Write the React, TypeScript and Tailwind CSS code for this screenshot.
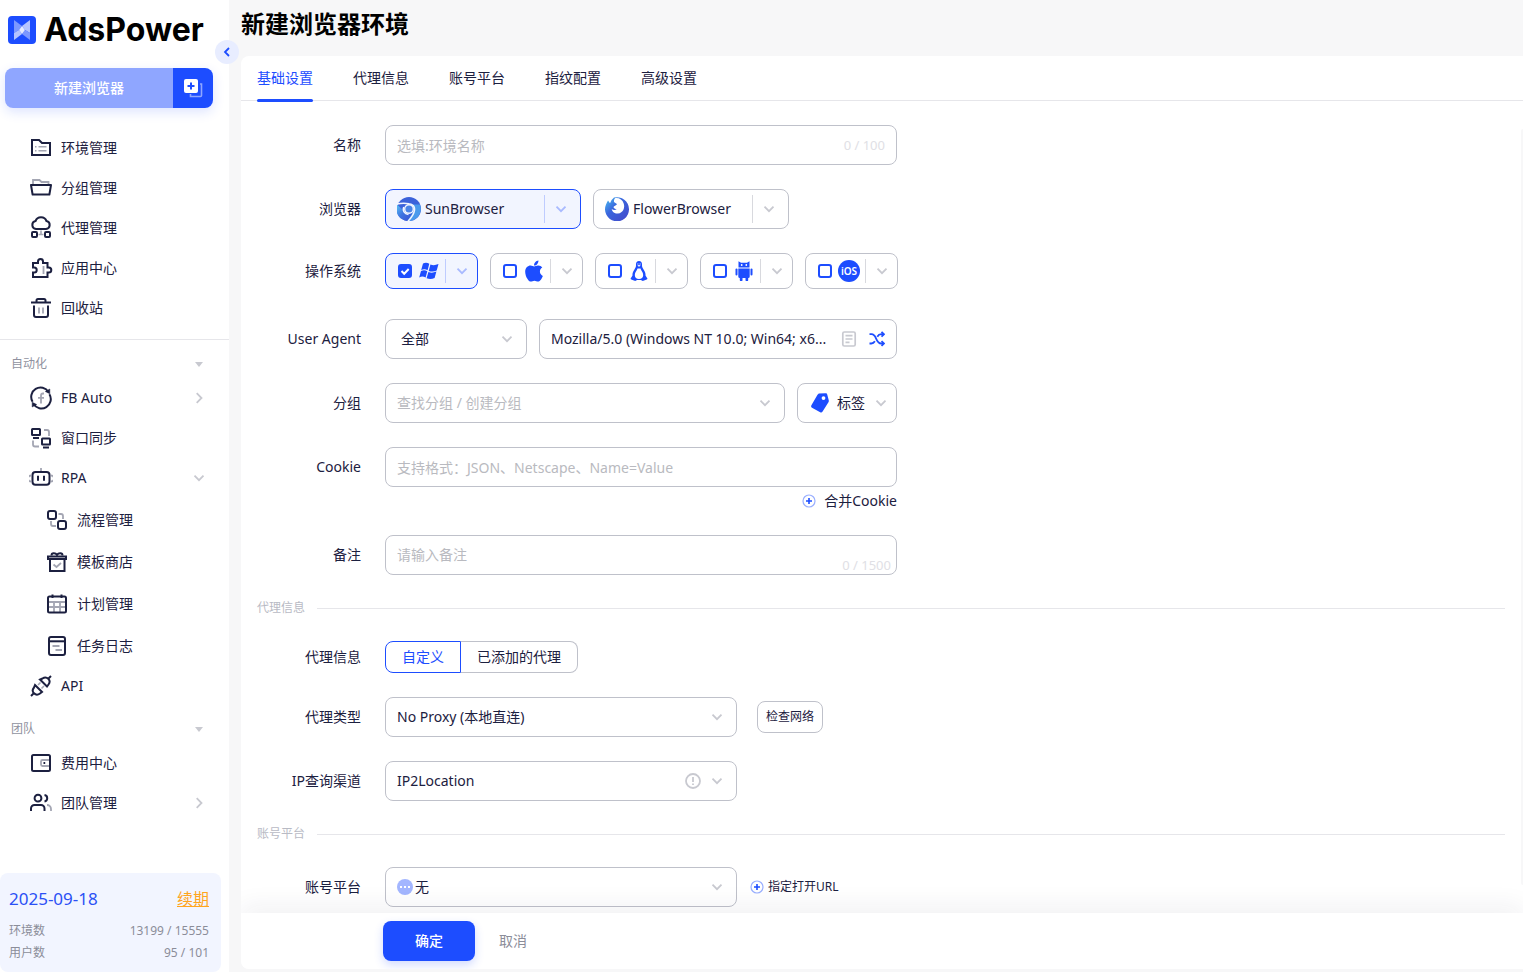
import React, { useState } from "react";
import { FaApple } from "react-icons/fa";

type IconName =
  | "env"
  | "group"
  | "proxy"
  | "apps"
  | "trash"
  | "fb"
  | "sync"
  | "rpa"
  | "flow"
  | "shop"
  | "plan"
  | "log"
  | "api"
  | "wallet"
  | "team";

type NavEntry = { title: string; icon: IconName; arrow?: "right" | "down"; sub?: boolean };

const mainNav: NavEntry[] = [
  { title: "环境管理", icon: "env" },
  { title: "分组管理", icon: "group" },
  { title: "代理管理", icon: "proxy" },
  { title: "应用中心", icon: "apps" },
  { title: "回收站", icon: "trash" },
];

const autoNav: NavEntry[] = [
  { title: "FB Auto", icon: "fb", arrow: "right" },
  { title: "窗口同步", icon: "sync" },
  { title: "RPA", icon: "rpa", arrow: "down" },
  { title: "流程管理", icon: "flow", sub: true },
  { title: "模板商店", icon: "shop", sub: true },
  { title: "计划管理", icon: "plan", sub: true },
  { title: "任务日志", icon: "log", sub: true },
  { title: "API", icon: "api" },
];

const teamNav: NavEntry[] = [
  { title: "费用中心", icon: "wallet" },
  { title: "团队管理", icon: "team", arrow: "right" },
];

const tabs = ["基础设置", "代理信息", "账号平台", "指纹配置", "高级设置"];

// first drawing is the dark outline, second one the pale detail
const navIcons: Record<IconName, [React.ReactNode, React.ReactNode]> = {
  env: [
    <path d="M3 4h7l3 3h8v12H3z" />,
    <path d="M6 10.8h1.5M9.5 10.8h8M6 14.8h1.5M9.5 14.8h8" strokeWidth="1.6" />,
  ],
  group: [<path d="M2 9h20l-1.6 9.5H3.6z" strokeLinejoin="round" />, <path d="M4 8V4h6.5l2 2H19.500v2" strokeWidth="1.8" />],
  proxy: [
    <>
      <path d="M7 13a4 4 0 0 1-.5-7.9 5.8 5.8 0 0 1 11 0A4 4 0 0 1 17 13z" />
      <rect x="3" y="16" width="5" height="5" rx="1" />
      <rect x="16" y="16" width="5" height="5" rx="1" />
    </>,
    <path d="M12 14.5v4M9.5 18.5h5" strokeWidth="1.6" />,
  ],
  apps: [
    <path d="M4 7h5V5.500a2.500 2.500 0 0 1 5 0V7h4.500v4.500h1.300a2.400 2.400 0 0 1 0 5h-1.300V21H4v-4.500h1.200a2.500 2.500 0 0 0 0-5H4z" />,
    <path d="M14.500 10v8" strokeWidth="1.8" />,
  ],
  trash: [
    <path d="M2 6.500h20M7.500 6V4.500a1.500 1.500 0 0 1 1.500-1.500h6a1.500 1.500 0 0 1 1.500 1.500V6M5 9.500V19a2 2 0 0 0 2 2h10a2 2 0 0 0 2-2V9.500" />,
    <path d="M10 11.500v6M14 11.500v6" strokeWidth="1.8" />,
  ],
  fb: [
    <>
      <path d="M19.500 6A9.300 9.300 0 0 0 3.600 15.800" />
      <path d="M4.500 18a9.300 9.300 0 0 0 15.900-9.800" />
      <path d="M20.800 3v4.800L16.300 5.500zM3.200 21v-4.800l4.500 2.300z" fill="currentColor" strokeWidth=".5" />
    </>,
    <path d="M15 7.500h-1a2 2 0 0 0-2 2V17.500M9 11.800h6" strokeWidth="1.8" />,
  ],
  sync: [
    <>
      <rect x="3" y="3" width="8" height="6" rx=".5" />
      <rect x="13" y="12.5" width="8" height="6" rx=".5" />
      <path d="M4 12h6M14 21.500h6" />
    </>,
    <path d="M15 4h3a2 2 0 0 1 2 2v4M4 14.500V18.500a2 2 0 0 0 2 2h4" strokeWidth="1.8" />,
  ],
  rpa: [
    <>
      <rect x="3.5" y="6" width="17" height="12.8" rx="3" />
      <path d="M9 9.800v5M15 9.800v5" />
    </>,
    <path d="M12 2v3M2 9.500a2.800 2.800 0 0 0 0 6M22 9.500a2.800 2.800 0 0 1 0 6" strokeWidth="1.8" />,
  ],
  flow: [
    <>
      <rect x="3" y="3" width="8" height="8" rx="2" />
      <rect x="13" y="13" width="8" height="8" rx="2" />
    </>,
    <path d="M13.500 6H16a2 2 0 0 1 2 2v3M6 13v3a2 2 0 0 0 2 2h3" strokeWidth="1.8" />,
  ],
  shop: [
    <>
      <path d="M3 6.500h18V9H3zM5 9.500V21h14.500V9.500" />
      <path d="M6.500 5.500c0-2.800 4-2.800 5.500-.5 1.500-2.300 5.500-2.300 5.500.5" />
    </>,
    <path d="m8.500 14.500 3 2.500 4.500-4" strokeWidth="1.8" />,
  ],
  plan: [
    <>
      <rect x="3" y="4.5" width="18" height="16" rx="1.5" />
      <path d="M7.500 2.500V6M16.500 2.500V6" />
    </>,
    <path d="M4 10h16M4 15h16M9 10v10M15 10v10" strokeWidth="1.8" />,
  ],
  log: [
    <>
      <rect x="4" y="3" width="16" height="18" rx="2" />
      <path d="M4 7.300h16" />
    </>,
    <path d="M7.500 12h7M10.500 16h6.500" strokeWidth="1.8" />,
  ],
  api: [
    <path d="m6 11 7 7-2 1.500c-2 1.500-4.500 1.300-6-.2s-1.500-4 0-5.800L6 11zM11 5.500l7 7 1.500-2c1.500-2 1.300-4.200-.2-5.700s-4-1.600-5.800-.3zM2 22l3-3M19 5l3-3" />,
    <path d="m9 11 2.500-2.500M12.500 14.500l2.500-2.500" strokeWidth="1.6" />,
  ],
  wallet: [
    <>
      <rect x="3" y="4" width="18" height="16" rx="1.5" />
      <path d="M14.500 12h1.700" />
    </>,
    <path d="M20 9h-6.500a1.500 1.500 0 0 0-1.500 1.500v3a1.500 1.500 0 0 0 1.500 1.500H20" strokeWidth="1.8" />,
  ],
  team: [
    <path d="M2 20v-2.500A3.500 3.500 0 0 1 5.500 14h6.500a3.500 3.500 0 0 1 3.500 3.500V20M9 3.800a3.400 3.400 0 1 1 0 6.800 3.400 3.400 0 1 1 0-6.800M15.500 4a3.300 3.300 0 0 1 0 6.500" />,
    <path d="M18 14a4 4 0 0 1 4 4v2" strokeWidth="1.8" />,
  ],
};

const NavIcon = ({ name }: { name: IconName }) => (
  <svg width="24" height="24" viewBox="0 0 24 24" fill="none" stroke="currentColor" strokeWidth="2" className="shrink-0">
    <g opacity=".4">{navIcons[name][1]}</g>
    {navIcons[name][0]}
  </svg>
);

const Chevron = ({ dir = "down" }: { dir?: "down" | "right" | "left" }) => (
  <svg width="12" height="12" viewBox="0 0 12 12" fill="none" stroke="currentColor" strokeWidth="1.8" className="shrink-0">
    {dir === "down" && <path d="m1.500 3.700 4.500 4.500 4.500-4.500" />}
    {dir === "right" && <path d="M3.700 1.200 8.500 6l-4.800 4.800" />}
    {dir === "left" && <path d="M8 2 4 6l4 4" />}
  </svg>
);

const PlusCircle = () => (
  <svg width="14" height="14" viewBox="0 0 14 14" fill="none" stroke="#1d4dff">
    <circle cx="7" cy="7" r="6" strokeOpacity=".45" strokeWidth="1.2" />
    <path d="M7 4v6M4 7h6" strokeWidth="1.6" />
  </svg>
);

const NavItem = ({ item }: { item: NavEntry }) => (
  <a
    href="#"
    className={`flex items-center gap-2 pr-6 ${item.sub ? "h-[42px] pt-0.5 pl-[45px]" : "h-10 pl-[29px]"}`}
  >
    <NavIcon name={item.icon} />
    <span className="flex-1">{item.title}</span>
    {item.arrow && (
      <span className="text-[#c8c9d0]">
        <Chevron dir={item.arrow} />
      </span>
    )}
  </a>
);

const NavSection = ({ title }: { title: string }) => (
  <button className="mt-[9px] flex h-7 w-full items-center justify-between pl-[11px] pr-[26px] text-xs text-[#9092a0]">
    {title}
    <svg width="8" height="5" viewBox="0 0 8 5" fill="#c8c9d0">
      <path d="M0 0h8L4 5z" />
    </svg>
  </button>
);

const Sidebar = () => (
  <aside className="relative flex w-[229px] shrink-0 flex-col bg-white">
    {/* Brand */}
    <div className="flex h-[60px] items-center gap-2 pl-2">
      <svg width="28" height="28" viewBox="0 0 28 28">
        <rect width="28" height="28" rx="4" fill="#1d4dff" />
        <path d="M6 4l8 6-3 4-5 3z" fill="#7d98ff" />
        <path d="M22 4l-8 6 3 4 5 3z" fill="#b5c4ff" />
        <path d="M6 24l8-6-3-4-5 3z" fill="#b5c4ff" />
        <path d="M22 24l-8-6 3-4 5 3z" fill="#7d98ff" />
        <path d="M6 17l5-3 3-4 3 4-3 4-3-4zM14 10l3 4-3 4-3-4z" fill="#e6ebff" />
      </svg>
      <span className="font-['Inter',sans-serif] text-[32px] font-bold text-black">AdsPower</span>
    </div>
    <button
      aria-label="收起"
      className="absolute top-10 -right-2.5 flex size-6 items-center justify-center rounded-full bg-[#e8edff] text-[#1d4dff]"
    >
      <Chevron dir="left" />
    </button>

    {/* New browser */}
    <div className="mt-2 mb-5 ml-[5px] flex h-10 w-[208px] overflow-hidden rounded-lg text-white shadow-[0_4px_12px_rgba(29,77,255,0.15)]">
      <button className="flex-1 bg-[#8fa6ff] font-medium">新建浏览器</button>
      <button aria-label="批量新建" className="flex w-10 items-center justify-center bg-[#1d4dff]">
        <svg width="20" height="20" viewBox="0 0 20 20" fill="none">
          <path d="M17 6h1.500v11.500a1 1 0 0 1-1 1H7.500V16" stroke="#8fa6ff" strokeWidth="1.6" />
          <rect x="1" y="1" width="14" height="14" rx="2" fill="#fff" />
          <path d="M8 4.500v7M4.500 8h7" stroke="#1d4dff" strokeWidth="2" />
        </svg>
      </button>
    </div>

    <nav className="flex-1">
      {mainNav.map((item) => (
        <NavItem key={item.title} item={item} />
      ))}
      <div className="mt-[11px] border-t border-[#e6e6ea] pb-px" />
      <NavSection title="自动化" />
      {autoNav.map((item) => (
        <NavItem key={item.title} item={item} />
      ))}
      <NavSection title="团队" />
      {teamNav.map((item) => (
        <NavItem key={item.title} item={item} />
      ))}
    </nav>

    {/* Plan */}
    <div className="mr-2 rounded-lg bg-[#f2f5ff] pt-3.5 pr-3 pb-2 pl-[9px] text-xs text-[#8b8d99]">
      <div className="mb-[9px] flex h-6 items-center justify-between text-base">
        <span className="text-[17px] text-[#2b50f5]">2025-09-18</span>
        <a href="#" className="text-[#ffa51f] underline">续期</a>
      </div>
      <div className="flex h-[22px] items-center justify-between">
        <span>环境数</span>
        <span>13199 / 15555</span>
      </div>
      <div className="flex h-[22px] items-center justify-between">
        <span>用户数</span>
        <span>95 / 101</span>
      </div>
    </div>
  </aside>
);

const Row = ({ label, htmlFor, children }: { label: string; htmlFor?: string; children: React.ReactNode }) => (
  <div className="flex items-start gap-6">
    <label htmlFor={htmlFor} className="flex min-h-10 w-[120px] shrink-0 items-center justify-end">
      {label}
    </label>
    {children}
  </div>
);

const Divider = ({ title }: { title: string }) => (
  <div className="flex h-[66px] items-center gap-3 pr-[18px] pl-4 text-xs text-[#b8bac4]">
    {title}
    <span className="h-px flex-1 bg-[#e6e6ea]" />
  </div>
);

type SelectProps = { id: string; value: string; width: string; text?: string; info?: boolean; dots?: boolean };

const Select = ({ id, value, width, text = "pl-[11px]", info, dots }: SelectProps) => (
  <div className={`relative h-10 ${width}`}>
    <select
      id={id}
      className={`h-full w-full appearance-none rounded-lg border border-[#bfc1ca] bg-white pr-8 outline-none ${text}`}
    >
      <option>{value}</option>
    </select>
    <span className="pointer-events-none absolute inset-y-0 right-3.5 flex items-center gap-2.5 text-[#c8c9d0]">
      {info && (
        <svg width="16" height="16" viewBox="0 0 16 16" fill="none" stroke="currentColor" strokeWidth="1.8">
          <circle cx="8" cy="8" r="7" />
          <path d="M8 4v5M8 10.500v1.500" />
        </svg>
      )}
      <Chevron />
    </span>
    {dots && (
      <span className="pointer-events-none absolute inset-y-0 left-3 flex items-center">
        <svg width="16" height="16" viewBox="0 0 16 16">
          <circle cx="8" cy="8" r="8" fill="#a3b6ff" />
          <path d="M3 7h2v2H3zM7 7h2v2H7zM11 7h2v2h-2z" fill="#fff" />
        </svg>
      </span>
    )}
  </div>
);

const SunLogo = () => (
  <svg width="24" height="24" viewBox="0 0 24 24">
    <defs>
      <linearGradient id="sun" x1="0" y1="0" x2="1" y2="1">
        <stop offset="0" stopColor="#58c4f5" />
        <stop offset=".5" stopColor="#3f74e0" />
        <stop offset="1" stopColor="#3b52d4" />
      </linearGradient>
    </defs>
    <circle cx="12" cy="12" r="12" fill="#3c62da" />
    <path d="M0 7.500A12 12 0 0 0 10.500 23.900L14 17l-7-3z" fill="url(#sun)" />
    <path d="M10.500 23.900A12 12 0 0 0 23 7.500h-7.500l1.500 6z" fill="#4a9aec" />
    <path
      d="M0 7c4-.8 8-.8 12-.3 4 .3 6 3 5.500 6.500-.5 4-3 7.500-6.500 11M6.800 10c-1.500 3.500.5 6.800 4.700 7.500"
      stroke="#f2f5ff"
      strokeWidth="1.5"
      fill="none"
    />
    <circle cx="12" cy="12" r="5" fill="#f2f5ff" />
    <circle cx="12" cy="12" r="3.6" fill="#4a83e6" />
  </svg>
);

const FlowerLogo = () => (
  <svg width="24" height="24" viewBox="0 0 24 24">
    <defs>
      <linearGradient id="flower" x1="0" y1="0" x2="1" y2="1">
        <stop offset="0" stopColor="#4cc3f2" />
        <stop offset=".4" stopColor="#3a66dd" />
        <stop offset="1" stopColor="#4547c9" />
      </linearGradient>
    </defs>
    <path
      d="M3 3.500l2 2.700A12 12 0 0 1 9 .6 12 12 0 0 1 24 12 12 12 0 1 1 1 7.500C1.500 6 2.300 5 3 3.500z"
      fill="url(#flower)"
    />
    <path
      d="M10 1.200c4-.6 7.500 1.500 8.600 5 1.800 4.500-.6 9.800-5.600 10.300-3.500.3-6-2-6.300-4.500 1.500 1.300 3.500 1.300 5 .3-1.500-.3-3-.8-3.200-2.300.7-1.200 2.500-1.300 3.500-2.700-.8-1.300-2.500-1.300-3-2.500-.3-1.300.2-2.600 1-3.600z"
      fill="#fff"
    />
  </svg>
);

const browsers = [
  { name: "SunBrowser", logo: <SunLogo /> },
  { name: "FlowerBrowser", logo: <FlowerLogo /> },
];

const systems = [
  {
    name: "Windows",
    icon: (
      <svg width="20" height="20" viewBox="0 0 20 20" fill="currentColor">
        <path d="M4 2.500c2.300-1.300 4.300-1 6.300.2L8.600 9.200C6.600 8 4.600 7.800 2.200 9zM11.400 3.400c2.500 1.200 4.800 1 8.100-.3l-1.800 6.300c-2.700 1.400-5.200 1.300-8 .5zM2 10c2.300-1.200 4.300-1 6.300.2l-1.700 6.400C4.600 15.400 2.600 15.200.2 16.400zM9.400 11c2.500 1 4.900 1 8-.4l-1.800 6.300c-2.700 1.400-5.200 1.300-8 .4z" />
      </svg>
    ),
  },
  { name: "macOS", icon: <FaApple size={24} className="shrink-0" /> },
  {
    name: "Linux",
    icon: (
      <svg width="20" height="20" viewBox="0 0 20 20">
        <path
          d="M10 0C7.800 0 6.800 1.500 7 4c.1 2-.6 3-1.700 4.700C4 10.800 3.300 12.500 3.500 14.500L1.500 17.800c0 1 2.500 1.200 4 2 1 .4 2-.3 2.500-.8h4c.5.5 1.500 1.200 2.500.8 1.500-.8 4-1 4-2L16.500 14.500c.2-2-.5-3.700-1.800-5.800C13.600 7 12.900 6 13 4c.2-2.500-.8-4-3-4z"
          fill="currentColor"
        />
        <path d="M8.500 7.500h3c.5 2 2.700 3.500 2.700 6.500 0 2.500-1.700 4-4.200 4s-4.200-1.500-4.200-4c0-3 2.200-4.500 2.700-6.500z" fill="#fff" />
        <path d="M8.300 4.500 10 5.800l1.700-1.300L10 4zM8.400 2.500h1v1h-1zM10.600 2.500h1v1h-1z" fill="#fff" />
      </svg>
    ),
  },
  {
    name: "Android",
    icon: (
      <svg width="20" height="20" viewBox="0 0 20 20" fill="currentColor">
        <path d="M4.500 6.500V.2L7 1.800h6L15.500.2v6.300z" />
        <path d="M4.300 7.500h11.400v8a1.500 1.500 0 0 1-1.500 1.500v2a1.200 1.200 0 0 1-2.700 0v-2h-3v2a1.200 1.200 0 0 1-2.700 0v-2a1.500 1.500 0 0 1-1.500-1.500z" />
        <rect x="1.5" y="7.5" width="2" height="7" rx="1" />
        <rect x="16.5" y="7.5" width="2" height="7" rx="1" />
        <circle cx="7.7" cy="4" r=".9" fill="#fff" />
        <circle cx="12.3" cy="4" r=".9" fill="#fff" />
      </svg>
    ),
  },
  {
    name: "iOS",
    icon: (
      <svg width="22" height="22" viewBox="0 0 22 22">
        <circle cx="11" cy="11" r="11" fill="currentColor" />
        <text x="11" y="14.5" textAnchor="middle" fontSize="10" fontWeight="600" fill="#fff">
          iOS
        </text>
      </svg>
    ),
  },
];

const inputClass = "h-10 w-full rounded-lg border border-[#bfc1ca] bg-white px-[11px] outline-none placeholder:text-[#b9bac0]";

const BasicForm = () => {
  const [browser, setBrowser] = useState("SunBrowser");
  const [checked, setChecked] = useState(["Windows"]);

  const toggle = (name: string) =>
    setChecked(checked.includes(name) ? checked.filter((n) => n !== name) : [...checked, name]);

  return (
    <form className="relative min-h-0 flex-1 overflow-hidden pt-6">
      <div className="flex flex-col gap-6">
        <Row label="名称" htmlFor="name">
          <div className="relative w-[512px]">
            <input id="name" placeholder="选填:环境名称" className={inputClass} />
            <span className="absolute inset-y-0 right-3 flex items-center text-[13px] text-[#e0e0e5]">0 / 100</span>
          </div>
        </Row>

        <Row label="浏览器">
          <div className="flex gap-3">
            {browsers.map((b) => {
              const active = b.name === browser;
              return (
                <div
                  key={b.name}
                  className={`flex h-10 w-[196px] items-center rounded-lg border pl-[11px] ${
                    active ? "border-[#1d4dff] bg-[#f2f5ff] text-[#a9baff]" : "border-[#bfc1ca] text-[#c8c9d0]"
                  }`}
                >
                  <button
                    type="button"
                    onClick={() => setBrowser(b.name)}
                    className="flex flex-1 items-center gap-1 text-[#1c2040]"
                  >
                    {b.logo}
                    {b.name}
                  </button>
                  <span className="h-7 w-px bg-current opacity-70" />
                  <button type="button" aria-label="版本" className="flex h-full w-[35px] items-center pl-2.5">
                    <Chevron />
                  </button>
                </div>
              );
            })}
          </div>
        </Row>

        <div className="flex items-start gap-6 pb-1.5">
          <span className="flex h-9 w-[120px] shrink-0 items-center justify-end">操作系统</span>
          <div className="flex gap-3">
            {systems.map((os) => {
              const active = checked.includes(os.name);
              return (
                <div
                  key={os.name}
                  className={`flex h-9 w-[93px] items-center rounded-lg border pl-3 ${
                    active ? "border-[#1d4dff] bg-[#f2f5ff] text-[#a9baff]" : "border-[#bfc1ca] text-[#c8c9d0]"
                  }`}
                >
                  <label className="flex items-center gap-[5px] pr-1 text-[#1d4dff]">
                    <span className="relative flex size-3.5">
                      <input
                        type="checkbox"
                        aria-label={os.name}
                        checked={active}
                        onChange={() => toggle(os.name)}
                        className="size-3.5 appearance-none rounded-[3px] border-2 border-[#1d4dff] checked:bg-[#1d4dff]"
                      />
                      {active && (
                        <svg viewBox="0 0 14 14" fill="none" stroke="#fff" strokeWidth="2" className="pointer-events-none absolute inset-0">
                          <path d="m3.500 7 2.700 2.700 4.500-4.700" />
                        </svg>
                      )}
                    </span>
                    <span className="flex size-6 items-center justify-center">{os.icon}</span>
                  </label>
                  <span className="h-6 w-px bg-current opacity-70" />
                  <button type="button" aria-label={`${os.name} 版本`} className="flex h-full flex-1 items-center pl-2.5">
                    <Chevron />
                  </button>
                </div>
              );
            })}
          </div>
        </div>

        <Row label="User Agent" htmlFor="ua-system">
          <div className="flex w-[512px] gap-3">
            <Select id="ua-system" value="全部" width="w-[142px]" text="pl-[15px]" />
            <div className="flex h-10 flex-1 items-center rounded-lg border border-[#bfc1ca] px-[11px]">
              <input
                aria-label="User Agent"
                defaultValue="Mozilla/5.0 (Windows NT 10.0; Win64; x6..."
                className="min-w-0 flex-1 outline-none"
              />
              <button type="button" aria-label="详情" className="mr-3 ml-1 text-[#c8c9d0]">
                <svg width="16" height="16" viewBox="0 0 16 16" fill="none" stroke="currentColor" strokeWidth="1.7">
                  <rect x="1.8" y="1" width="12.4" height="14" rx="1.5" />
                  <path d="M4.500 4.700h7M4.500 8h7M4.500 11.300h4" />
                </svg>
              </button>
              <button type="button" aria-label="随机" className="text-[#1d4dff]">
                <svg width="16" height="16" viewBox="0 0 16 16" fill="none" stroke="currentColor" strokeWidth="1.8">
                  <path d="M.5 3.200h2c2.200 0 3.300 1.300 4.500 4.100 1.300 3.200 2.700 5.200 5.200 5.200h2M.5 12.500h1.800c1.700 0 2.700-.8 3.600-2.200M8.300 5.800c.9-1.600 2-2.600 3.900-2.600h2" />
                  <path d="M12.500 .8 15 3.200 12.500 5.600M12.500 10.100l2.500 2.400-2.500 2.400" />
                </svg>
              </button>
            </div>
          </div>
        </Row>

        <Row label="分组" htmlFor="group">
          <div className="flex w-[512px] gap-3">
            <Select id="group" value="查找分组 / 创建分组" width="w-[400px]" text="pl-[11px] text-[#b9bac0]" />
            <button type="button" className="flex h-10 w-[100px] items-center rounded-lg border border-[#bfc1ca] pl-3">
              <svg width="20" height="20" viewBox="0 0 20 20" fill="#1d4dff">
                <path
                  fillRule="evenodd"
                  d="M7.500 1.800 8.800.5l6.700-.2c1 0 1.500.5 1.800 1.400l1.500 5.800c.1.5 0 1-.2 1.500l-6 9.600c-.6.9-1.500 1.100-2.400.6l-8.200-4.500c-.9-.5-1.200-1.500-.6-2.400zM13.500 3.200a1.900 1.900 0 1 0 0 3.800 1.900 1.900 0 0 0 0-3.800z"
                />
              </svg>
              <span className="mr-2.5 ml-[7px]">标签</span>
              <span className="text-[#c8c9d0]">
                <Chevron />
              </span>
            </button>
          </div>
        </Row>

        <Row label="Cookie" htmlFor="cookie">
          <div className="w-[512px]">
            <input id="cookie" placeholder="支持格式：JSON、Netscape、Name=Value" className={inputClass} />
            <div className="flex h-6 justify-end pt-1">
              <button type="button" className="flex items-center gap-2">
                <PlusCircle />
                合并Cookie
              </button>
            </div>
          </div>
        </Row>

        <Row label="备注" htmlFor="remark">
          <div className="relative h-10 w-[512px]">
            <textarea
              id="remark"
              placeholder="请输入备注"
              className="block h-10 w-full resize-none overflow-hidden rounded-lg border border-[#bfc1ca] px-[11px] py-[9px] outline-none placeholder:text-[#b9bac0]"
            />
            <span className="absolute right-1.5 bottom-0 text-[13px] leading-5 text-[#e0e0e5]">0 / 1500</span>
          </div>
        </Row>
      </div>

      <Divider title="代理信息" />

      <div className="flex flex-col gap-6">
        <div className="flex items-center gap-6">
          <span className="w-[120px] shrink-0 text-right">代理信息</span>
          <div className="flex h-8">
            <button type="button" className="w-[76px] rounded-l-lg border border-[#1d4dff] text-[#1d4dff]">
              自定义
            </button>
            <button type="button" className="w-[117px] rounded-r-lg border border-l-0 border-[#bfc1ca]">
              已添加的代理
            </button>
          </div>
        </div>
        <Row label="代理类型" htmlFor="proxy-type">
          <div className="flex items-center gap-5">
            <Select id="proxy-type" value="No Proxy (本地直连)" width="w-[352px]" />
            <button type="button" className="h-8 w-[66px] rounded-lg border border-[#bfc1ca] text-xs">
              检查网络
            </button>
          </div>
        </Row>
        <Row label="IP查询渠道" htmlFor="ip-channel">
          <Select id="ip-channel" value="IP2Location" width="w-[352px]" info />
        </Row>
      </div>

      <Divider title="账号平台" />

      <Row label="账号平台" htmlFor="platform">
        <div className="flex items-center gap-[13px]">
          <Select id="platform" value="无" width="w-[352px]" text="pl-[29px]" dots />
          <button type="button" className="flex items-center gap-1 text-xs">
            <PlusCircle />
            指定打开URL
          </button>
        </div>
      </Row>
      <span className="absolute top-7 right-0 bottom-7 w-0.5 rounded-l bg-[#f7f7f8]" />
    </form>
  );
};

export default function App() {
  const [activeTab, setActiveTab] = useState(tabs[0]);

  return (
    <div className="flex h-screen min-h-[940px] bg-[#f7f7f8] font-['Noto_Sans','Noto_Sans_CJK_SC',sans-serif] text-sm text-[#1c2040]">
      <Sidebar />

      <main className="flex min-w-0 flex-1 flex-col pb-[3px] pl-3">
        <h1 className="flex h-14 items-start pt-2 text-2xl leading-8 font-bold text-black">新建浏览器环境</h1>

        <section className="flex min-h-0 flex-1 flex-col overflow-hidden rounded-l-lg bg-white">
          <div className="flex h-[45px] shrink-0 gap-10 border-b border-[#e6e6ea] pl-4">
            {tabs.map((tab) => (
              <button
                key={tab}
                onClick={() => setActiveTab(tab)}
                className={`relative h-full ${tab === activeTab ? "text-[#1d4dff]" : ""}`}
              >
                {tab}
                {tab === activeTab && (
                  <span className="absolute inset-x-0 -bottom-0.5 h-[3px] rounded-full bg-[#1d4dff]" />
                )}
              </button>
            ))}
          </div>

          <BasicForm />

          {/* Footer */}
          <div className="relative flex h-14 shrink-0 items-center gap-6 bg-white pl-[142px] shadow-[0_-8px_24px_rgba(28,32,64,0.06)]">
            <button className="h-10 w-[92px] rounded-lg bg-[#1d4dff] font-medium text-white shadow-[0_4px_10px_rgba(29,77,255,0.2)]">
              确定
            </button>
            <button className="text-[#8b8d99]">取消</button>
          </div>
        </section>
      </main>
    </div>
  );
}
